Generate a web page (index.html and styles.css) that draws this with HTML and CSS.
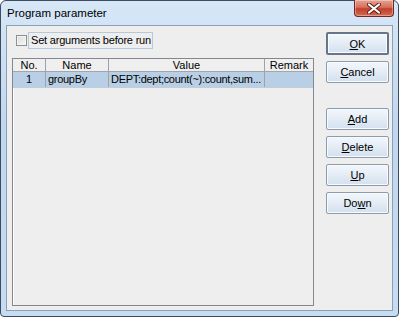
FILE: index.html
```html
<!DOCTYPE html>
<html lang="en">
  <head>
    <meta charset="UTF-8" />
    <title>Program parameter</title>
    <link rel="stylesheet" href="styles.css">
  </head>
  <body>
    <div class="window">
      <div class="titlebar">
        <span class="title">Program parameter</span>
        <div class="close-btn">
          <svg width="14" height="11" viewBox="0 0 14 11">
            <path d="M2 1.5 L12 9.5 M12 1.5 L2 9.5" stroke="#5a2018" stroke-width="4" stroke-linecap="round"></path>
            <path d="M2 1.5 L12 9.5 M12 1.5 L2 9.5" stroke="#ffffff" stroke-width="2.2" stroke-linecap="round"></path>
          </svg>
        </div>
      </div>

      <div class="content">
        <div class="main">
          <div class="check-row">
            <span class="checkbox"></span>
            <span class="check-label">Set arguments before run</span>
          </div>

          <div class="table-pane">
            <div class="row header">
              <div class="cell col-no">No.</div>
              <div class="cell col-name">Name</div>
              <div class="cell col-value">Value</div>
              <div class="cell col-remark">Remark</div>
            </div>
            <div class="row selected">
              <div class="cell col-no">1</div>
              <div class="cell col-name left">groupBy</div>
              <div class="cell col-value left">DEPT:dept;count(~):count,sum...</div>
              <div class="cell col-remark"></div>
            </div>
          </div>
        </div>

        <div class="side">
          <button class="btn default"><u>O</u>K</button>
          <button class="btn"><u>C</u>ancel</button>
          <button class="btn spaced"><u>A</u>dd</button>
          <button class="btn"><u>D</u>elete</button>
          <button class="btn"><u>U</u>p</button>
          <button class="btn">Do<u>w</u>n</button>
        </div>
      </div>
    </div>
  </body>
</html>
```

FILE: styles.css
```css
* {
  margin: 0;
  padding: 0;
  box-sizing: border-box;
}

body {
  width: 399px;
  height: 317px;
  overflow: hidden;
  background-color: #ffffff;
  font-family: "Liberation Sans", Arial, sans-serif;
  font-size: 11px;
  color: #000000;
}

/* Window frame */
.window {
  width: 399px;
  height: 317px;
  border: 1px solid #3d4b5c;
  border-radius: 6px 6px 4px 4px;
  background: linear-gradient(180deg, #d6e7f7 0%, #bfd7ef 40%, #c6dcf2 100%);
  padding: 0 5px 5px 5px;
  display: flex;
  flex-direction: column;
}

.titlebar {
  height: 24px;
  display: flex;
  justify-content: space-between;
  align-items: flex-start;
}

.title {
  margin-top: 6px;
  padding-left: 1px;
  font-size: 11.5px;
  color: #000000;
}

.close-btn {
  width: 40px;
  height: 17px;
  margin-top: -1px;
  margin-right: -1px;
  border: 1px solid #6e2a20;
  border-top: none;
  border-radius: 0 0 4px 4px;
  background: linear-gradient(180deg, #e6a394 0%, #d7705c 45%, #c2402a 55%, #d26a4f 100%);
  display: flex;
  align-items: center;
  justify-content: center;
  box-shadow: inset 0 0 0 1px rgba(255, 255, 255, 0.35);
}

/* Dialog content */
.content {
  flex: 1;
  display: flex;
  background-color: #eeeeee;
  border: 1px solid #8d9fb3;
}

.main {
  display: flex;
  flex-direction: column;
  padding: 6px 0 4px 5px;
}

.check-row {
  display: flex;
  align-items: center;
  height: 17px;
  padding-left: 4px;
}

.checkbox {
  width: 11px;
  height: 11px;
  border: 1px solid #8e8f8f;
  background: linear-gradient(135deg, #dcdcdc 0%, #f6f6f6 100%);
  box-shadow: inset 0 0 0 1px #f4f4f4;
}

.check-label {
  margin-left: 1px;
  height: 17px;
  line-height: 15px;
  padding: 0 1px 0 2px;
  border: 1px solid #b4c9de;
  letter-spacing: -0.2px;
}

/* Table */
.table-pane {
  flex: 1;
  width: 302px;
  margin-top: 9px;
  border: 1px solid #828790;
  box-shadow: inset 1px 1px 0 #ffffff;
  background-color: #eeeeee;
}

.row {
  display: flex;
}

.header {
  height: 13px;
  border-bottom: 1px solid #a2a5aa;
  background-color: #efefef;
}

.selected {
  height: 16px;
  background-color: #b8cfe5;
  border-bottom: 1px solid #c4ccd6;
}

.cell {
  text-align: center;
  border-right: 1px solid #9ea3a9;
  line-height: 15px;
  white-space: nowrap;
  overflow: hidden;
}

.header .cell {
  line-height: 12px;
}

.cell.left {
  text-align: left;
  padding-left: 2px;
  letter-spacing: -0.3px;
}

.col-no {
  width: 33px;
}

.col-name {
  width: 63px;
}

.col-value {
  width: 156px;
}

.col-remark {
  width: 48px;
  border-right: none;
}

/* Buttons */
.side {
  display: flex;
  flex-direction: column;
  gap: 6px;
  margin-left: 12px;
  padding-top: 6px;
}

.btn {
  width: 63px;
  height: 22px;
  border: 1px solid #8b9bb0;
  border-radius: 2px;
  background: linear-gradient(180deg, #f3f7fb 0%, #e4ecf5 50%, #d3e0ee 100%);
  box-shadow: inset 0 0 0 1px #f8fbfe;
  font-family: "Liberation Sans", Arial, sans-serif;
  font-size: 11px;
  color: #000000;
}

.btn.default {
  height: 23px;
  border: 2px solid #66768a;
}

.btn.spaced {
  margin-top: 19px;
}
```
